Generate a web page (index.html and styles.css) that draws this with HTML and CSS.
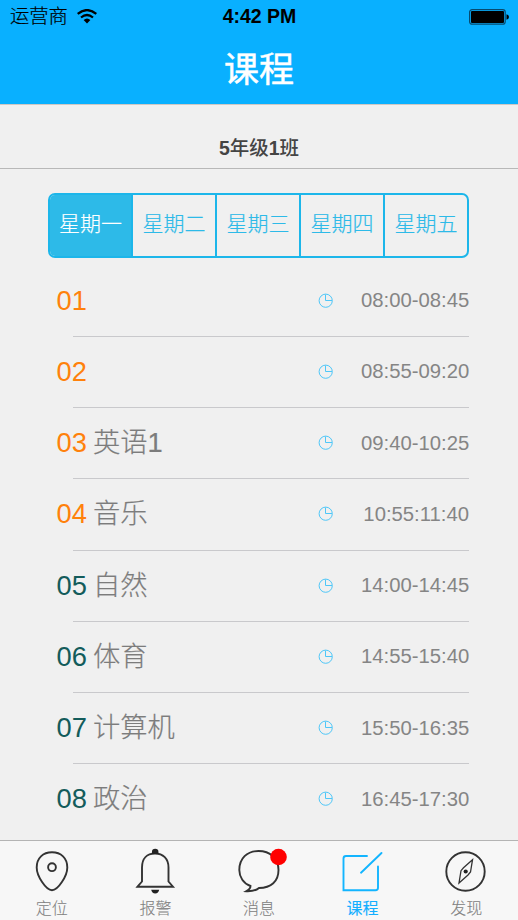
FILE: index.html
```html
<!DOCTYPE html>
<html lang="zh-CN">
<head>
<meta charset="utf-8">
<title>课程</title>
<link rel="stylesheet" href="styles.css">
</head>
<body>
<svg class="defs" width="0" height="0">
  <symbol id="clock" viewBox="0 0 16 16"><circle cx="7.700" cy="7.700" r="6.600"/><path d="M7.500 1.500V7.500H14"/></symbol>
</svg>
<div class="app">
  <header class="header">
    <div class="status">
      <div class="carrier"><span>运营商</span>
        <svg width="20" height="15" viewBox="0 0 20 15"><path d="M.7 4.900Q10-2.800 19.300 4.900M4 8.500Q10 3.500 16 8.500" fill="none" stroke="#000" stroke-width="2.200"/><path d="M6.600 11Q10 8 13.400 11L10 14.500Z"/></svg>
      </div>
      <div class="time">4:42 PM</div>
      <div class="battery">
        <svg width="40" height="16" viewBox="0 0 40 16"><rect x=".6" y=".6" width="35.600" height="14.600" rx="2.500" fill="none" stroke="#064b70" stroke-width="1.200"/><rect x="2" y="2" width="33" height="12" rx="1"/><path d="M37.500 5.300Q40 6 40 8T37.500 10.700Z"/></svg>
      </div>
    </div>
    <h1 class="title">课程</h1>
  </header>
  <h2 class="class-name"><b>5</b>年级<b>1</b>班</h2>
  <main class="content">
    <nav class="days">
      <span class="day active">星期一</span><span class="day">星期二</span><span class="day">星期三</span><span class="day">星期四</span><span class="day">星期五</span>
    </nav>
    <ul class="lessons">
      <li class="lesson am"><b class="no">01</b><span class="subject"></span><svg class="clock"><use href="#clock"/></svg><span class="hours">08:00-08:45</span></li>
      <li class="lesson am"><b class="no">02</b><span class="subject"></span><svg class="clock"><use href="#clock"/></svg><span class="hours">08:55-09:20</span></li>
      <li class="lesson am"><b class="no">03</b><span class="subject">英语1</span><svg class="clock"><use href="#clock"/></svg><span class="hours">09:40-10:25</span></li>
      <li class="lesson am"><b class="no">04</b><span class="subject">音乐</span><svg class="clock"><use href="#clock"/></svg><span class="hours">10:55:11:40</span></li>
      <li class="lesson"><b class="no">05</b><span class="subject">自然</span><svg class="clock"><use href="#clock"/></svg><span class="hours">14:00-14:45</span></li>
      <li class="lesson"><b class="no">06</b><span class="subject">体育</span><svg class="clock"><use href="#clock"/></svg><span class="hours">14:55-15:40</span></li>
      <li class="lesson"><b class="no">07</b><span class="subject">计算机</span><svg class="clock"><use href="#clock"/></svg><span class="hours">15:50-16:35</span></li>
      <li class="lesson"><b class="no">08</b><span class="subject">政治</span><svg class="clock"><use href="#clock"/></svg><span class="hours">16:45-17:30</span></li>
    </ul>
  </main>
  <footer class="tabs">
    <div class="tab"><svg class="icon" viewBox="0 0 50 50"><path d="M25 43.300C19 43.300 9.700 29 9.700 20.500C9.700 11 16 5.300 25 5.300S40.300 11 40.300 20.500C40.300 29 31 43.300 25 43.300Z"/><circle cx="25" cy="20.200" r="3.900"/></svg><span>定位</span></div>
    <div class="tab"><svg class="icon" viewBox="0 0 50 50"><path d="M7.500 39.700 12 34.500V20.500C12 11.500 17 6.500 25 6.500S38.500 11.500 38.500 20.500V34.500L43 39.700Z"/><path class="solid" d="M22 7V4.500Q22 1.700 25.200 1.700T28.400 4.500V7ZM21.200 42.800H29.200Q28.500 46.500 25.200 46.500T21.200 42.800Z"/></svg><span>报警</span></div>
    <div class="tab"><svg class="icon" viewBox="0 0 50 50"><path d="M16.500 39C9.500 36.500 5.300 30 5.300 23C5.300 11.500 13 4 24.500 4S44.500 11.500 44.500 23S37 41 25 41Q21 44.500 12.500 44.200Q16.500 42 16.500 39Z"/><circle class="badge" cx="44.500" cy="10" r="8.300"/></svg><span>消息</span></div>
    <div class="tab current"><svg class="icon" viewBox="0 0 50 50"><path d="M29 9H8Q5.500 9 5.500 11.500V43.300H37.500Q40 43.300 40 40.800V19.500M23 25.700 43.500 6"/></svg><span>课程</span></div>
    <div class="tab"><svg class="icon" viewBox="0 0 50 50"><circle cx="24.500" cy="24.500" r="19.200"/><path class="needle" d="M31.500 12.800 29.500 25 27 28 18 36 20 23.700 22.500 20.800Z"/><circle class="solid" cx="24.700" cy="24.500" r="2.100"/></svg><span>发现</span></div>
  </footer>
</div>
</body>
</html>
```
FILE: styles.css
```css
* { box-sizing: border-box; }
body { margin: 0; background: #f0f0f0; font-family: "Liberation Sans", "Noto Sans CJK SC", sans-serif; }
.defs { position: absolute; }
.app { width: 518px; height: 920px; display: flex; flex-direction: column; overflow: hidden; }
.header { height: 105px; flex: none; background: #09b0ff; border-bottom: 1px solid #cfc8c4; }
.status { height: 33px; padding: 0 9px 0 10px; display: grid; grid-template-columns: 1fr auto 1fr; align-items: center; }
.carrier { display: flex; align-items: center; gap: 9px; font-size: 19.300px; line-height: 33px; font-weight: 300; -webkit-text-stroke: .2px; }
.time { font-size: 19.500px; font-weight: bold; }
.battery { display: flex; justify-content: flex-end; }
.title { margin: 0; height: 71px; padding-top: 1px; line-height: 72px; text-align: center; color: #fff; font-size: 35px; font-weight: 400; -webkit-text-stroke: .5px; }
.class-name { margin: 0; height: 64px; flex: none; padding-top: 23px; line-height: 40px; text-align: center; font-size: 19.500px; font-weight: 500; color: #444; border-bottom: 1px solid #b8b8b8; }
.content { padding: 24px 49px 0 48px; flex: 1; min-height: 0; }
.days { height: 65px; display: grid; grid-template-columns: 81px repeat(4, 1fr); border: 2px solid #1cb6ea; border-radius: 7px; overflow: hidden; }
.day { text-align: center; line-height: 58px; font-size: 21px; font-weight: 300; -webkit-text-stroke: .2px; color: #2dbae8; white-space: nowrap; }
.day + .day { border-left: 2px solid #1cb6ea; }
.day.active { background: #2dbae8; color: #fff; }
.lessons { list-style: none; margin: 0; padding: 7.500px 0 0; }
.lesson { height: 71.250px; padding: 0 0 1px 8.500px; display: flex; align-items: center; background: linear-gradient(#c9c9cc, #c9c9cc) 25px 100% / 100% 1px no-repeat; }
.lesson:last-child { background: none; }
.no { width: 36.500px; font-size: 27.300px; font-weight: 400; color: #135c5b; }
.am .no { color: #ff810b; }
.subject { flex: 1; font-size: 27.300px; font-weight: 300; -webkit-text-stroke: .2px; line-height: 40px; color: #7c7c7c; }
.clock { width: 16px; height: 16px; margin-right: 27px; fill: none; stroke: #4fc7f8; stroke-width: 1; }
.hours { width: 108px; text-align: right; font-size: 20.300px; color: #858585; white-space: nowrap; }
.tabs { height: 80px; flex: none; display: grid; grid-template-columns: repeat(5, 1fr); background: #f7f7f7; border-top: 1px solid #b4b4b4; }
.tab { display: flex; flex-direction: column; align-items: center; padding-top: 6px; font-size: 16px; line-height: 24px; font-weight: 300; -webkit-text-stroke: .1px; color: #808080; }
.icon { width: 50px; height: 50px; overflow: visible; fill: none; stroke: #333; stroke-width: 1.900; }
.icon .solid { fill: #222; stroke: none; }
.icon .badge { fill: #f00; stroke: none; }
.icon .needle { stroke-width: 1.300; }
.current { color: #13afff; font-weight: 400; }
.current .icon { stroke: #13b5ff; stroke-linecap: round; }
```
